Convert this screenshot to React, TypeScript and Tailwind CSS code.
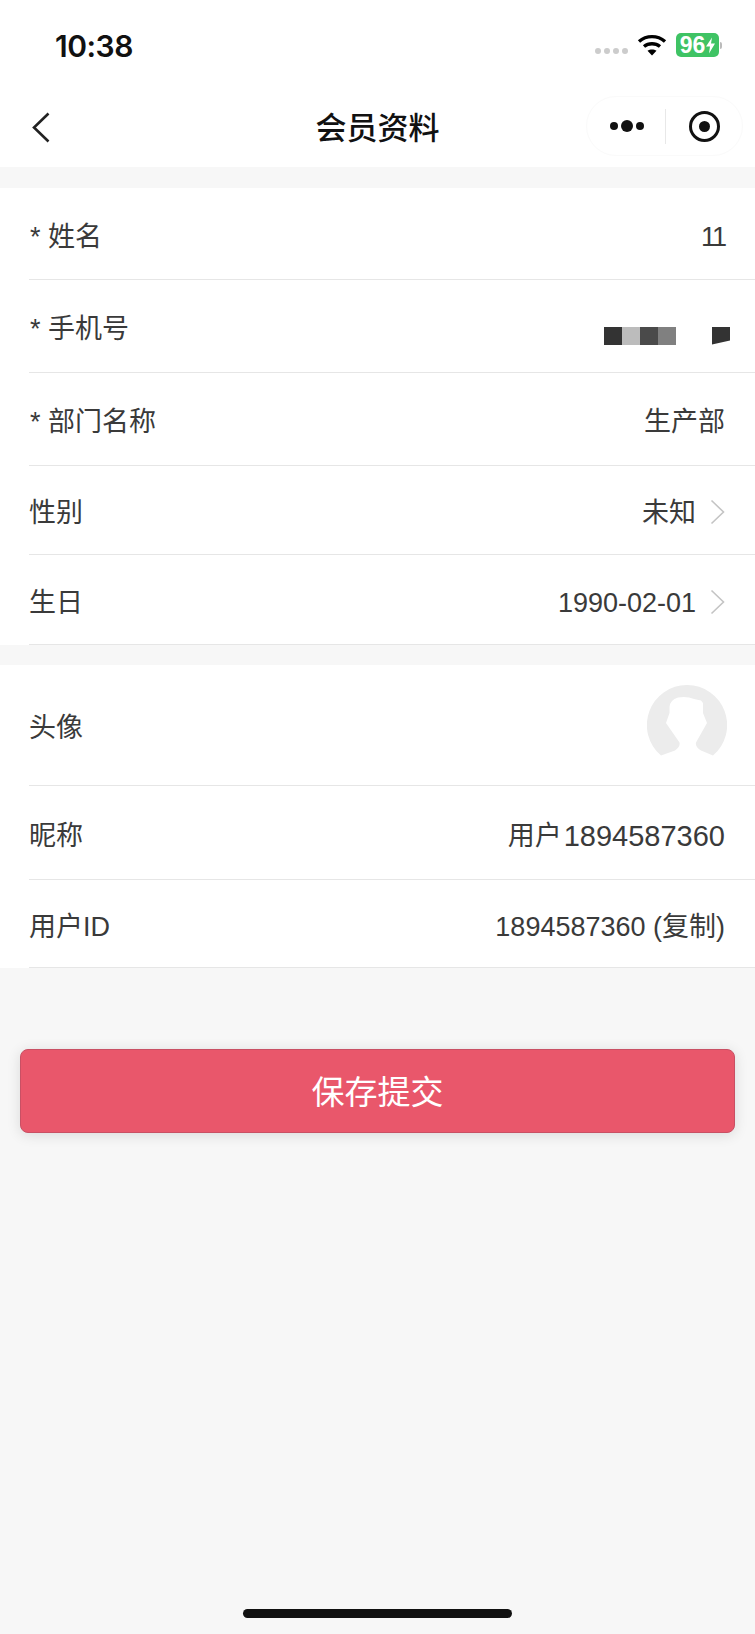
import type { ReactNode } from "react";

const font = { fontFamily: '"Liberation Sans", "Noto Sans CJK SC", sans-serif' };

function Chevron() {
  return (
    <svg width="15" height="26" viewBox="0 0 15 26" fill="none" className="mb-[3px] ml-[14px]">
      <path d="M1.5 1.5 L13.5 13 L1.5 24.5" stroke="#c4c4c4" strokeWidth="1.6" />
    </svg>
  );
}

function Row({ label, h, children }: { label: string; h: string; children: ReactNode }) {
  return (
    <div className={`pl-[29px] ${h}`}>
      <div className="flex h-full items-center justify-between border-b border-[#e6e6e6] pr-[30px] pt-[7px]">
        <span className={label.startsWith("*") ? "ml-px" : ""}>{label}</span>
        <div className="flex items-center">{children}</div>
      </div>
    </div>
  );
}

function Mosaic() {
  return (
    <div className="mr-[-5px] mt-[12px] flex items-start">
      <div className="h-[18px] w-[18px] bg-[#333333]" />
      <div className="h-[18px] w-[18px] bg-[#bcbcbc]" />
      <div className="h-[18px] w-[18px] bg-[#4a4a4a]" />
      <div className="h-[18px] w-[18px] bg-[#808080]" />
      <div className="ml-[36px] h-[18px] w-[18px] bg-[#333333] [clip-path:polygon(0_0,100%_0,100%_78%,0_100%)]" />
    </div>
  );
}

function Avatar() {
  return (
    <svg width="80" height="80" viewBox="0 0 80 80" className="mb-[7px] mr-[-2px]">
      <path
        d="M40 0 A40 40 0 0 1 66 70.5 L54 65.5 Q48 62 49 57.5 L60 38 L56 28 L56 18 L54 15.5 L47 14 Q40 11 31 12.5 Q23 15 22.5 22 L22.5 28 L19 38 L32.5 57.5 Q33.5 62 28 65.5 L14 70.5 A40 40 0 0 1 40 0 Z"
        fill="#ececec"
      />
    </svg>
  );
}

export default function App() {
  return (
    <div className="flex h-[1634px] w-[755px] flex-col overflow-hidden bg-[#f7f7f7] text-[27px] text-[#3a3a3a]" style={font}>
      {/* status + nav */}
      <div className="h-[167px] bg-white">
        <div className="flex h-[84px] items-start justify-between pl-[55px] pr-[33px] pt-[26px]">
          <span className="font-['Inter'] text-[30px] font-semibold leading-[40px] tracking-[-0.5px] text-[#111111]">10:38</span>
          <div className="flex items-center pt-[7px]">
            <div className="mt-[11px] flex gap-[3px]">
              <div className="h-[6px] w-[6px] rounded-full bg-[#cccccc]" />
              <div className="h-[6px] w-[6px] rounded-full bg-[#cccccc]" />
              <div className="h-[6px] w-[6px] rounded-full bg-[#cccccc]" />
              <div className="h-[6px] w-[6px] rounded-full bg-[#cccccc]" />
            </div>
            <svg width="30" height="22" viewBox="0 0 30 22" fill="none" className="ml-[9px]">
              <path d="M2 7.5 C9.5 1 20.5 1 28 7.5" stroke="#000" strokeWidth="3.4" />
              <path d="M7 12.5 C11.5 8.8 18.5 8.8 23 12.5" stroke="#000" strokeWidth="3.4" />
              <path d="M15 21.5 L10.5 16.8 C13 15 17 15 19.5 16.8 Z" fill="#000" />
            </svg>
            <div className="ml-[9px] flex h-[24px] w-[43px] items-center justify-center rounded-[5px] bg-[#3fc364] text-[23px] font-bold leading-none text-white">
              96
              <svg width="9" height="17" viewBox="0 0 9 16" className="ml-px">
                <path d="M6 0 L0 9 H4 L3 16 L9 6 H5 Z" fill="#fff" />
              </svg>
            </div>
            <div className="ml-px h-[7px] w-[2px] rounded-r bg-[#bbbbbb]" />
          </div>
        </div>
        <div className="relative flex h-[83px] items-center justify-between pl-[32px] pr-[12px]">
          <svg width="18" height="31" viewBox="0 0 18 31" fill="none" className="mt-[3px]">
            <path d="M16.5 1.5 L2 15.5 L16.5 29.5" stroke="#222222" strokeWidth="2.6" />
          </svg>
          <span className="absolute left-0 right-0 top-[25px] text-center text-[31px] font-medium leading-[40px] text-[#111111]">
            会员资料
          </span>
          <div className="flex h-[60px] w-[157px] items-center rounded-full border border-[#fafafa] pt-[1px]">
            <div className="flex w-[78px] items-center justify-center gap-[3px] pl-[2px]">
              <div className="h-[8px] w-[8px] rounded-full bg-[#111111]" />
              <div className="h-[12px] w-[12px] rounded-full bg-[#111111]" />
              <div className="h-[8px] w-[8px] rounded-full bg-[#111111]" />
            </div>
            <div className="h-[35px] w-px bg-[#e8e8e8]" />
            <div className="flex flex-1 items-center justify-center">
              <div className="flex h-[31px] w-[31px] items-center justify-center rounded-full border-[3.5px] border-[#111111]">
                <div className="h-[11px] w-[11px] rounded-full bg-[#111111]" />
              </div>
            </div>
          </div>
        </div>
      </div>

      {/* first group */}
      <div className="mt-[21px] bg-white">
        <Row label="* 姓名" h="h-[92px]"><span className="text-[27px] tracking-[-2px]">11</span></Row>
        <Row label="* 手机号" h="h-[93px]"><Mosaic /></Row>
        <Row label="* 部门名称" h="h-[93px]"><span>生产部</span></Row>
        <Row label="性别" h="h-[89px]"><span>未知</span><Chevron /></Row>
        <Row label="生日" h="h-[90px]"><span>1990-02-01</span><Chevron /></Row>
      </div>

      {/* second group */}
      <div className="mt-[20px] bg-white">
        <Row label="头像" h="h-[121px]"><Avatar /></Row>
        <Row label="昵称" h="h-[94px]">
          <span>用户</span>
          <span className="ml-[2px] text-[29px] leading-none">1894587360</span>
        </Row>
        <Row label="用户ID" h="h-[88px]"><span>1894587360 (复制)</span></Row>
      </div>

      <div className="mx-[20px] mt-[81px] flex h-[84px] items-center justify-center rounded-[8px] border border-[#c95064] bg-[#e9576b] pt-[3px] text-[33px] text-white shadow-[0_2px_14px_rgba(0,0,0,0.12)]">
        保存提交
      </div>

      <div className="mx-auto mb-[16px] mt-auto h-[9px] w-[269px] rounded-full bg-[#111111]" />
    </div>
  );
}
